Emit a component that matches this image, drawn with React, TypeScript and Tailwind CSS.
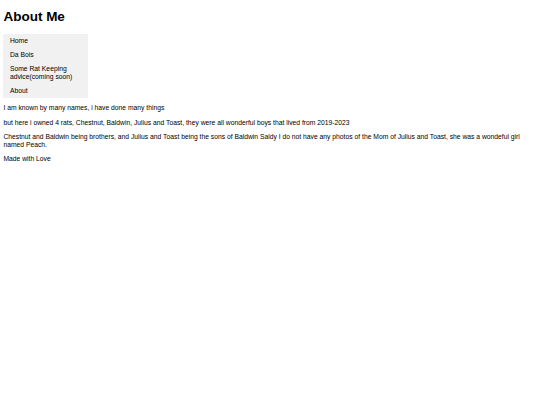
export default function App() {
    const links = ['Home', 'Da Bois', 'Some Rat Keeping advice(coming soon)', 'About'];

    return (
        <div className="min-h-[405px] bg-white px-[3.4px] pt-[8.5px] text-black font-['Liberation_Sans',Arial,sans-serif] text-[6.75px] leading-[8px]">
            <h1 className="text-[13.5px] font-bold leading-[1.15] mb-[10px]">About Me</h1>

            {/* Nav box */}
            <ul className="w-[85px] bg-[#f1f1f1]">
                {links.map(l => (
                    <li key={l} className="px-[6.6px] py-[3px]">{l}</li>
                ))}
            </ul>

            <p className="my-[6.3px]">I am known by many names, i have done many things</p>
            <p className="my-[6px]">but here i owned 4 rats, Chestnut, Baldwin, Julius and Toast, they were all wonderful boys that lived from 2019-2023</p>
            <p className="my-[6px]">Chestnut and Baldwin being brothers, and Julius and Toast being the sons of Baldwin Saldy I do not have any photos of the Mom of Julius and Toast, she was a wondeful girl named Peach.</p>
            <p className="my-[6px]">Made with Love</p>
        </div>
    );
}
